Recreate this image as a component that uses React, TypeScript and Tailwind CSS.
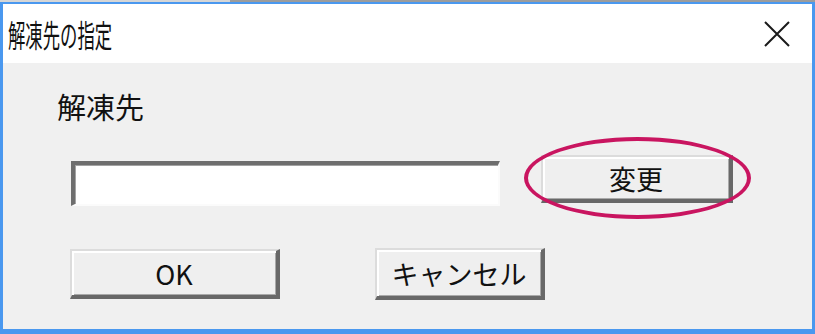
import React from "react";

const jp = "font-['Noto_Sans_CJK_JP','Noto_Sans',sans-serif]";

function Win98Button({
  label,
  className = "",
}: {
  label: string;
  className?: string;
}) {
  return (
    <button
      className={`flex items-center justify-center bg-[#efefef] border-l-[2px] border-t-[2px] border-l-[#dcdcdc] border-t-[#dcdcdc] border-r-[4px] border-b-[4px] border-r-[#686868] border-b-[#686868] shadow-[inset_2px_2px_0_#ffffff,inset_-1px_-1px_0_#a9a9a9] text-[27px] leading-none text-[#111] ${jp} ${className}`}
    >
      {label}
    </button>
  );
}

export default function App() {
  return (
    <div className="w-[815px] h-[334px] flex flex-col overflow-hidden bg-[#f0f0f0]">
      {/* window behind */}
      <div className="flex h-[2px] shrink-0">
        <div className="w-[230px] bg-[#d6d6d6]" />
        <div className="flex-1 bg-[#9c9c9c]" />
      </div>

      <div className="flex-1 flex flex-col border-t-[2px] border-l-[3px] border-r-[3px] border-b-[5px] border-[#4a98ef]">
        {/* TITLE BAR */}
        <div className="h-[59px] shrink-0 bg-white flex items-center justify-between pl-[5px] pr-[22px]">
          <span
            className={`inline-block origin-left scale-x-[0.56] text-[31px] leading-none text-[#111] ${jp}`}
          >
            解凍先の指定
          </span>
          <svg width="26" height="26" viewBox="0 0 26 26">
            <path
              d="M1 1 L25 25 M25 1 L1 25"
              stroke="#1a1a1a"
              strokeWidth="2"
              fill="none"
            />
          </svg>
        </div>

        {/* BODY */}
        <div className="flex-1 flex flex-col bg-[#f0f0f0] pt-[27px]">
          <div className={`pl-[54px] h-[32px] flex items-center text-[29px] leading-none text-[#111] ${jp}`}>
            解凍先
          </div>

          <div className="flex items-start pl-[68px] mt-[33px]">
            <div className="mt-[6px] w-[429px] h-[45px] bg-white border-t-[4px] border-l-[4px] border-t-[#6e6e6e] border-l-[#6e6e6e] border-r-[2px] border-b-[2px] border-r-[#fbfbfb] border-b-[#fbfbfb] shadow-[inset_1px_1px_0_#a3a3a3]" />
            <div className="relative ml-[41px]">
              <Win98Button label="変更" className="w-[192px] h-[48px]" />
              <div className="absolute -left-[17px] -top-[18px] w-[227px] h-[82px] rounded-[50%] border-[4px] border-[#c91560] pointer-events-none" />
            </div>
          </div>

          <div className="flex items-start pl-[67px] mt-[42px]">
            <Win98Button label="OK" className="w-[210px] h-[50px] mt-[1px]" />
            <Win98Button label="キャンセル" className="ml-[95px] w-[170px] h-[52px]" />
          </div>
        </div>
      </div>
    </div>
  );
}
